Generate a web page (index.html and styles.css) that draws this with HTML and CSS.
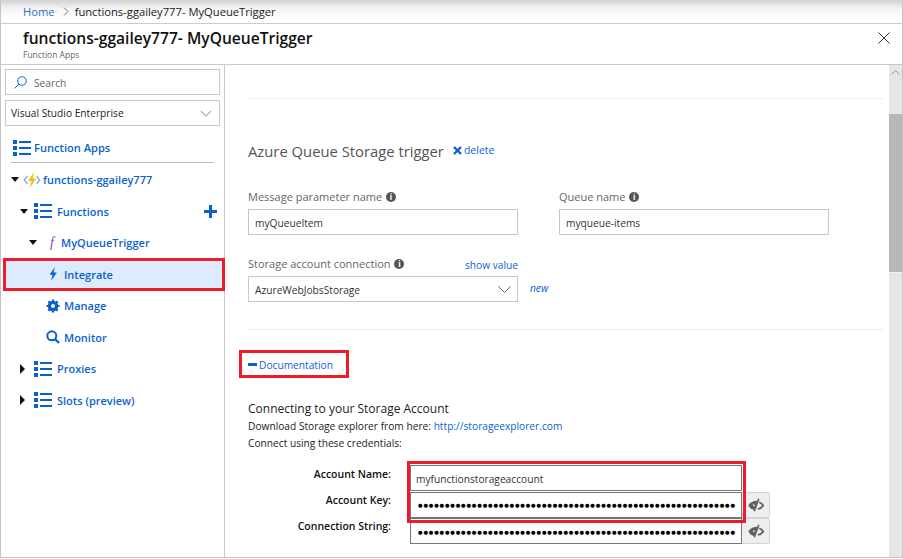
FILE: index.html
```html
<!DOCTYPE html>
<html lang="en">
<head>
    <meta charset="UTF-8">
    <title>functions-ggailey777- MyQueueTrigger</title>
    <link rel="stylesheet" href="styles.css">
</head>
<body>
    <svg class="defs" width="0" height="0">
        <symbol id="list" viewBox="0 0 18 16">
            <path d="M0 0h4v4H0zM0 6h4v4H0zM0 12h4v4H0zM6 1h12v2H6zM6 7h12v2H6zM6 13h12v2H6z"/>
        </symbol>
        <symbol id="eye" viewBox="0 0 16 14">
            <path d="M.3 7.500C2 4.500 5 2.800 9.500 2.800L6.300 12C3.500 11.500 1.500 9.800 .3 7.500z" fill="#5f5f5f"/>
            <circle cx="5.800" cy="7.300" r="1" fill="#ddd"/>
            <path d="M11.200 4.300C13 5 14.500 6.200 15.300 7.500 14.200 9.200 12.200 10.600 9.800 11" fill="none" stroke="#5f5f5f" stroke-width="1.600"/>
            <path d="M10.800 .8L6.300 13.200" stroke="#5f5f5f" stroke-width="1.600"/>
        </symbol>
    </svg>
    <div class="app">
        <div class="breadcrumb">
            <a>Home</a>
            <svg class="crumb-sep" width="6" height="9" viewBox="0 0 6 9"><path d="M1 .5l4 4-4 4" fill="none" stroke="#777"/></svg>
            <span>functions-ggailey777- MyQueueTrigger</span>
        </div>
        <div class="blade-header">
            <div>
                <div class="blade-title">functions-ggailey777- MyQueueTrigger</div>
                <div class="blade-sub">Function Apps</div>
            </div>
            <svg class="close" width="12" height="12" viewBox="0 0 12 12"><path d="M.5.5l11 11M11.500.5l-11 11" stroke="#333" fill="none"/></svg>
        </div>
        <div class="blade-body">
            <div class="sidebar">
                <div class="side-box">
                    <svg width="13" height="13" viewBox="0 0 13 13" class="search-icon"><circle cx="8" cy="5" r="4.300" fill="none" stroke="#0b6cd8"/><path d="M5 8l-4.500 4.500" stroke="#0b6cd8" fill="none"/></svg>
                    <span class="search-text">Search</span>
                </div>
                <div class="side-box side-select">
                    <span>Visual Studio Enterprise</span>
                    <svg width="12" height="7" viewBox="0 0 12 7"><path d="M1 1l5 5 5-5" fill="none" stroke="#bbb" stroke-width="1.500"/></svg>
                </div>
                <div class="apps-row">
                    <svg class="list-icon" width="18" height="16"><use href="#list"/></svg>
                    <span>Function Apps</span>
                </div>
                <div class="tree">
                    <div class="row lvl0">
                        <span class="caret-down"></span>
                        <svg class="app-icon" width="18" height="16" viewBox="0 0 18 16">
                            <path d="M4.500 4L1.200 8l3.300 4M13.500 4l3.300 4-3.300 4" fill="none" stroke="#7fa9d4" stroke-width="1.200"/>
                            <path d="M11 0L5 9h3.500L6.500 16l7-9.500H9.800z" fill="#f4bc1d"/>
                        </svg>
                        <span>functions-ggailey777</span>
                    </div>
                    <div class="row lvl1">
                        <span class="caret-down"></span>
                        <svg class="list-icon" width="18" height="16"><use href="#list"/></svg>
                        <span>Functions</span>
                        <svg class="plus" width="13" height="13" viewBox="0 0 13 13"><path d="M5 0h3v5h5v3H8v5H5V8H0V5h5z"/></svg>
                    </div>
                    <div class="row lvl2">
                        <span class="caret-down"></span>
                        <span class="func-f">f</span>
                        <span>MyQueueTrigger</span>
                    </div>
                    <div class="row lvl3 selected">
                        <svg class="item-icon" width="14" height="14" viewBox="0 0 14 14"><path d="M9 0L3.500 7.800h3L5 14l5.800-8.500H7.500z"/></svg>
                        <span>Integrate</span>
                    </div>
                    <div class="row lvl3">
                        <svg class="item-icon" width="14" height="14" viewBox="0 0 14 14"><circle cx="7" cy="7" r="3.800" fill="none" stroke="#0b5fd0" stroke-width="3"/><path d="M7 .5v13M.5 7h13M2.400 2.400l9.200 9.200M11.600 2.400l-9.200 9.200" stroke="#0b5fd0" stroke-width="2.200"/><circle cx="7" cy="7" r="2" fill="#fff"/></svg>
                        <span>Manage</span>
                    </div>
                    <div class="row lvl3">
                        <svg class="item-icon" width="14" height="14" viewBox="0 0 14 14"><circle cx="5.800" cy="5.800" r="4.500" fill="none" stroke="#0b5fd0" stroke-width="2"/><path d="M9 9l4 4" stroke="#0b5fd0" stroke-width="2.400"/></svg>
                        <span>Monitor</span>
                    </div>
                    <div class="row lvl1">
                        <span class="caret-right"></span>
                        <svg class="list-icon" width="18" height="16"><use href="#list"/></svg>
                        <span>Proxies</span>
                    </div>
                    <div class="row lvl1">
                        <span class="caret-right"></span>
                        <svg class="list-icon" width="18" height="16"><use href="#list"/></svg>
                        <span>Slots (preview)</span>
                    </div>
                </div>
            </div>
            <div class="main">
                <div class="content">
                    <hr class="rule first-rule">
                    <div class="trigger-head">
                        <h2>Azure Queue Storage trigger</h2>
                        <a class="delete"><svg width="9" height="9" viewBox="0 0 9 9"><path d="M1 1l7 7M8 1L1 8" stroke="#0b5fd0" stroke-width="2.400"/></svg>delete</a>
                    </div>
                    <div class="field-row">
                        <div class="field">
                            <label>Message parameter name <i class="info">i</i></label>
                            <div class="input">myQueueItem</div>
                        </div>
                        <div class="field">
                            <label>Queue name <i class="info">i</i></label>
                            <div class="input">myqueue-items</div>
                        </div>
                    </div>
                    <div class="conn-row">
                        <div class="field">
                            <div class="conn-label">
                                <label>Storage account connection <i class="info">i</i></label>
                                <a class="show-value">show value</a>
                            </div>
                            <div class="input input-select">
                                <span>AzureWebJobsStorage</span>
                                <svg width="13" height="7" viewBox="0 0 13 7"><path d="M.5.5l6 6 6-6" fill="none" stroke="#666"/></svg>
                            </div>
                        </div>
                        <a class="new-link">new</a>
                    </div>
                    <hr class="rule second-rule">
                    <a class="doc-toggle"><span class="minus"></span>Documentation</a>
                    <h3>Connecting to your Storage Account</h3>
                    <p>Download Storage explorer from here: <a>http://storageexplorer.com</a></p>
                    <p>Connect using these credentials:</p>
                    <div class="creds">
                        <div class="cred-row">
                            <b>Account Name:</b>
                            <div class="cred-input">myfunctionstorageaccount</div>
                        </div>
                        <div class="cred-row">
                            <b>Account Key:</b>
                            <div class="cred-input dots">●●●●●●●●●●●●●●●●●●●●●●●●●●●●●●●●●●●●●●●●●●●●●●●●●●●●●●●●●●●</div>
                            <div class="eye-btn"><svg width="16" height="14"><use href="#eye"/></svg></div>
                        </div>
                        <div class="cred-row">
                            <b>Connection String:</b>
                            <div class="cred-input dots">●●●●●●●●●●●●●●●●●●●●●●●●●●●●●●●●●●●●●●●●●●●●●●●●●●●●●●●●●●●</div>
                            <div class="eye-btn"><svg width="16" height="14"><use href="#eye"/></svg></div>
                        </div>
                        <div class="red-box"></div>
                    </div>
                </div>
                <div class="scrollbar">
                    <svg class="scroll-up" width="9" height="5" viewBox="0 0 9 5"><path d="M.5 4.500l4-4 4 4" fill="none" stroke="#999"/></svg>
                    <div class="thumb"></div>
                </div>
            </div>
        </div>
    </div>
</body>
</html>
```

FILE: styles.css
```css
html, body {
    margin: 0;
    background-color: #fff;
}

body {
    font-family: "Open Sans", sans-serif;
    font-size: 10.2px;
    color: #333;
}

.defs {
    position: absolute;
}

a {
    color: #0b62d6;
}

.app {
    width: 903px;
    height: 558px;
    box-sizing: border-box;
    border: solid #c4c4c4;
    border-width: 0 1px 1px 1px;
    overflow: hidden;
    display: flex;
    flex-direction: column;
}

.breadcrumb {
    height: 23px;
    flex: none;
    display: flex;
    align-items: center;
    padding-left: 22px;
    font-size: 11.2px;
    color: #222;
    background: linear-gradient(#d2d2d2 0, #f2f2f2 8px, #fff 18px);
    border-bottom: 1px solid #ccc;
}

.breadcrumb a {
    color: #2b6fc9;
}

.crumb-sep {
    margin: 0 6px 0 8px;
}

.blade-header {
    height: 40px;
    flex: none;
    display: flex;
    justify-content: space-between;
    padding: 0 12px 0 22px;
    border-bottom: 1px solid #c9c9c9;
}

.blade-title {
    font-size: 15.6px;
    font-weight: 600;
    color: #111;
    line-height: 21px;
    margin-top: 4px;
}

.blade-sub {
    font-size: 8.5px;
    color: #666;
    line-height: 12px;
}

.close {
    margin-top: 8px;
}

.blade-body {
    flex: 1;
    display: flex;
    min-height: 0;
}

.sidebar {
    width: 224px;
    flex: none;
    box-sizing: border-box;
    border-right: 1px solid #c9c9c9;
    padding-top: 4px;
}

.side-box {
    height: 26px;
    box-sizing: border-box;
    margin: 0 4px 5px 4px;
    border: 1px solid #c8c8c8;
    display: flex;
    align-items: center;
    padding: 0 5px;
    color: #222;
}

.search-icon {
    margin: 0 7px 0 3px;
}

.search-text {
    color: #666;
    position: relative;
    top: 1px;
}

.side-select {
    justify-content: space-between;
    padding-right: 7px;
}

.apps-row {
    height: 28px;
    margin: 7.500px 10px 0 10px;
    padding-left: 2px;
    display: flex;
    align-items: center;
    gap: 3px;
    font-size: 11.100px;
    font-weight: 600;
    color: #0b5fd0;
    border-bottom: 1px solid #bbb;
}

.list-icon {
    fill: #0b5fd0;
    flex: none;
}

.tree {
    padding-top: 1.250px;
}

.row {
    height: 31.5px;
    box-sizing: border-box;
    display: flex;
    align-items: center;
    font-size: 11px;
    font-weight: 600;
    color: #0b5fd0;
}

.lvl0 {
    padding-left: 10px;
}

.lvl1 {
    padding-left: 19px;
}

.lvl2 {
    padding-left: 28px;
}

.lvl3 {
    padding-left: 45px;
}

.caret-down {
    width: 0;
    height: 0;
    border: solid transparent;
    border-width: 5px 4.500px 0 4.500px;
    border-top-color: #111;
    margin-right: 4px;
}

.lvl1 .caret-down {
    margin-right: 6px;
}

.lvl2 .caret-down {
    margin-right: 7px;
}

.caret-right {
    width: 0;
    height: 0;
    border: solid transparent;
    border-width: 5px 0 5px 5px;
    border-left-color: #111;
    margin-right: 9px;
}

.app-icon {
    margin-right: 2px;
}

.lvl1 .list-icon {
    margin-right: 5px;
}

.plus {
    fill: #0b5fd0;
    margin-left: auto;
    margin-right: 7px;
}

.func-f {
    font-family: "Liberation Serif", serif;
    font-style: italic;
    font-weight: 400;
    font-size: 14px;
    color: #7a4e9c;
    width: 16px;
    text-align: center;
    margin-right: 1px;
}

.item-icon {
    fill: #0b5fd0;
    margin-right: 4px;
}

.selected {
    height: 33px;
    margin: -0.750px -1px -0.750px 2px;
    padding-left: 40px;
    background-color: #dcecfc;
    border: 3px solid #ec1c2a;
}

.main {
    flex: 1;
    display: flex;
    min-width: 0;
}

.content {
    flex: 1;
    min-width: 0;
    padding: 0 6px 0 23px;
    overflow: hidden;
}

.rule {
    height: 1px;
    border: 0;
    margin: 0;
    background-color: #eee;
}

.first-rule {
    margin-top: 33px;
}

.trigger-head {
    display: flex;
    align-items: center;
    gap: 9px;
    margin-top: 41px;
    height: 22px;
}

h2 {
    margin: 0;
    font-size: 14.800px;
    font-weight: 400;
    color: #555;
}

.delete {
    display: flex;
    align-items: center;
    gap: 2px;
    font-size: 10.500px;
    position: relative;
    top: -1px;
}

.field-row {
    display: flex;
    gap: 41px;
    margin-top: 27px;
}

.field {
    width: 270px;
}

label {
    display: block;
    height: 20px;
    line-height: 16px;
    font-size: 11px;
    color: #666;
}

.info {
    display: inline-block;
    width: 10px;
    height: 10px;
    border-radius: 50%;
    background-color: #555;
    color: #fff;
    font-size: 8px;
    font-weight: 700;
    font-style: normal;
    line-height: 10px;
    text-align: center;
    vertical-align: 1px;
    margin-left: 1px;
}

.input {
    height: 26px;
    box-sizing: border-box;
    border: 1px solid #c8c8c8;
    padding: 1px 6px 0 6px;
    display: flex;
    align-items: center;
    color: #333;
}

.input-select {
    justify-content: space-between;
}

.conn-row {
    display: flex;
    align-items: flex-end;
    margin-top: 21px;
}

.conn-label {
    display: flex;
    justify-content: space-between;
}

.show-value {
    padding-top: 2px;
}

.new-link {
    font-style: italic;
    margin: 0 0 7px 12px;
}

.second-rule {
    margin-top: 27px;
}

.doc-toggle {
    display: flex;
    align-items: center;
    gap: 2px;
    width: 110px;
    height: 28px;
    box-sizing: border-box;
    margin: 20px 0 0 -9px;
    padding: 2px 0 0 6px;
    border: 3px solid #ec1c2a;
}

.minus {
    width: 9px;
    height: 3px;
    background-color: #0b62d6;
    margin-top: -2px;
}

h3 {
    margin: 23px 0 0 0;
    font-size: 12px;
    font-weight: 400;
    line-height: 16px;
    color: #222;
}

p {
    margin: 0;
    line-height: 17px;
    color: #222;
}

h3 + p {
    margin-top: 1px;
}

.creds {
    position: relative;
    margin-top: 13px;
}

.cred-row {
    display: flex;
    align-items: center;
    height: 26.500px;
}

.cred-row b {
    width: 143px;
    text-align: right;
    font-size: 10.500px;
    font-weight: 600;
    color: #111;
    margin-right: 19px;
    position: relative;
    top: -5px;
}

.cred-row:first-child b {
    top: -4px;
}

.cred-input {
    width: 332px;
    height: 26px;
    box-sizing: border-box;
    border: 1px solid #777;
    background-color: #fff;
    padding: 1px 5px 0 5px;
    display: flex;
    align-items: center;
    white-space: nowrap;
    overflow: hidden;
    color: #333;
}

.dots {
    padding-left: 7px;
    font-family: "DejaVu Sans", sans-serif;
    font-size: 5.200px;
    letter-spacing: 0.860px;
    color: #000;
}

.eye-btn {
    width: 28px;
    height: 26px;
    box-sizing: border-box;
    border: 1px solid #d4d4d4;
    border-left: 0;
    border-radius: 0 3px 3px 0;
    background-color: #eee;
    display: flex;
    align-items: center;
    justify-content: center;
}

/* annotation over the name and key rows */
.red-box {
    position: absolute;
    left: 159px;
    top: -4px;
    width: 339px;
    height: 62px;
    box-sizing: border-box;
    border: 3px solid #ec1c2a;
}

.scrollbar {
    width: 13px;
    flex: none;
    background-color: #e6e6e6;
    position: relative;
}

.scroll-up {
    position: absolute;
    left: 2px;
    top: 5px;
}

.thumb {
    position: absolute;
    top: 49px;
    left: 0;
    right: 0;
    height: 158px;
    background-color: #b7b7b7;
    border-bottom: 1px solid #f2f2f2;
}
```
